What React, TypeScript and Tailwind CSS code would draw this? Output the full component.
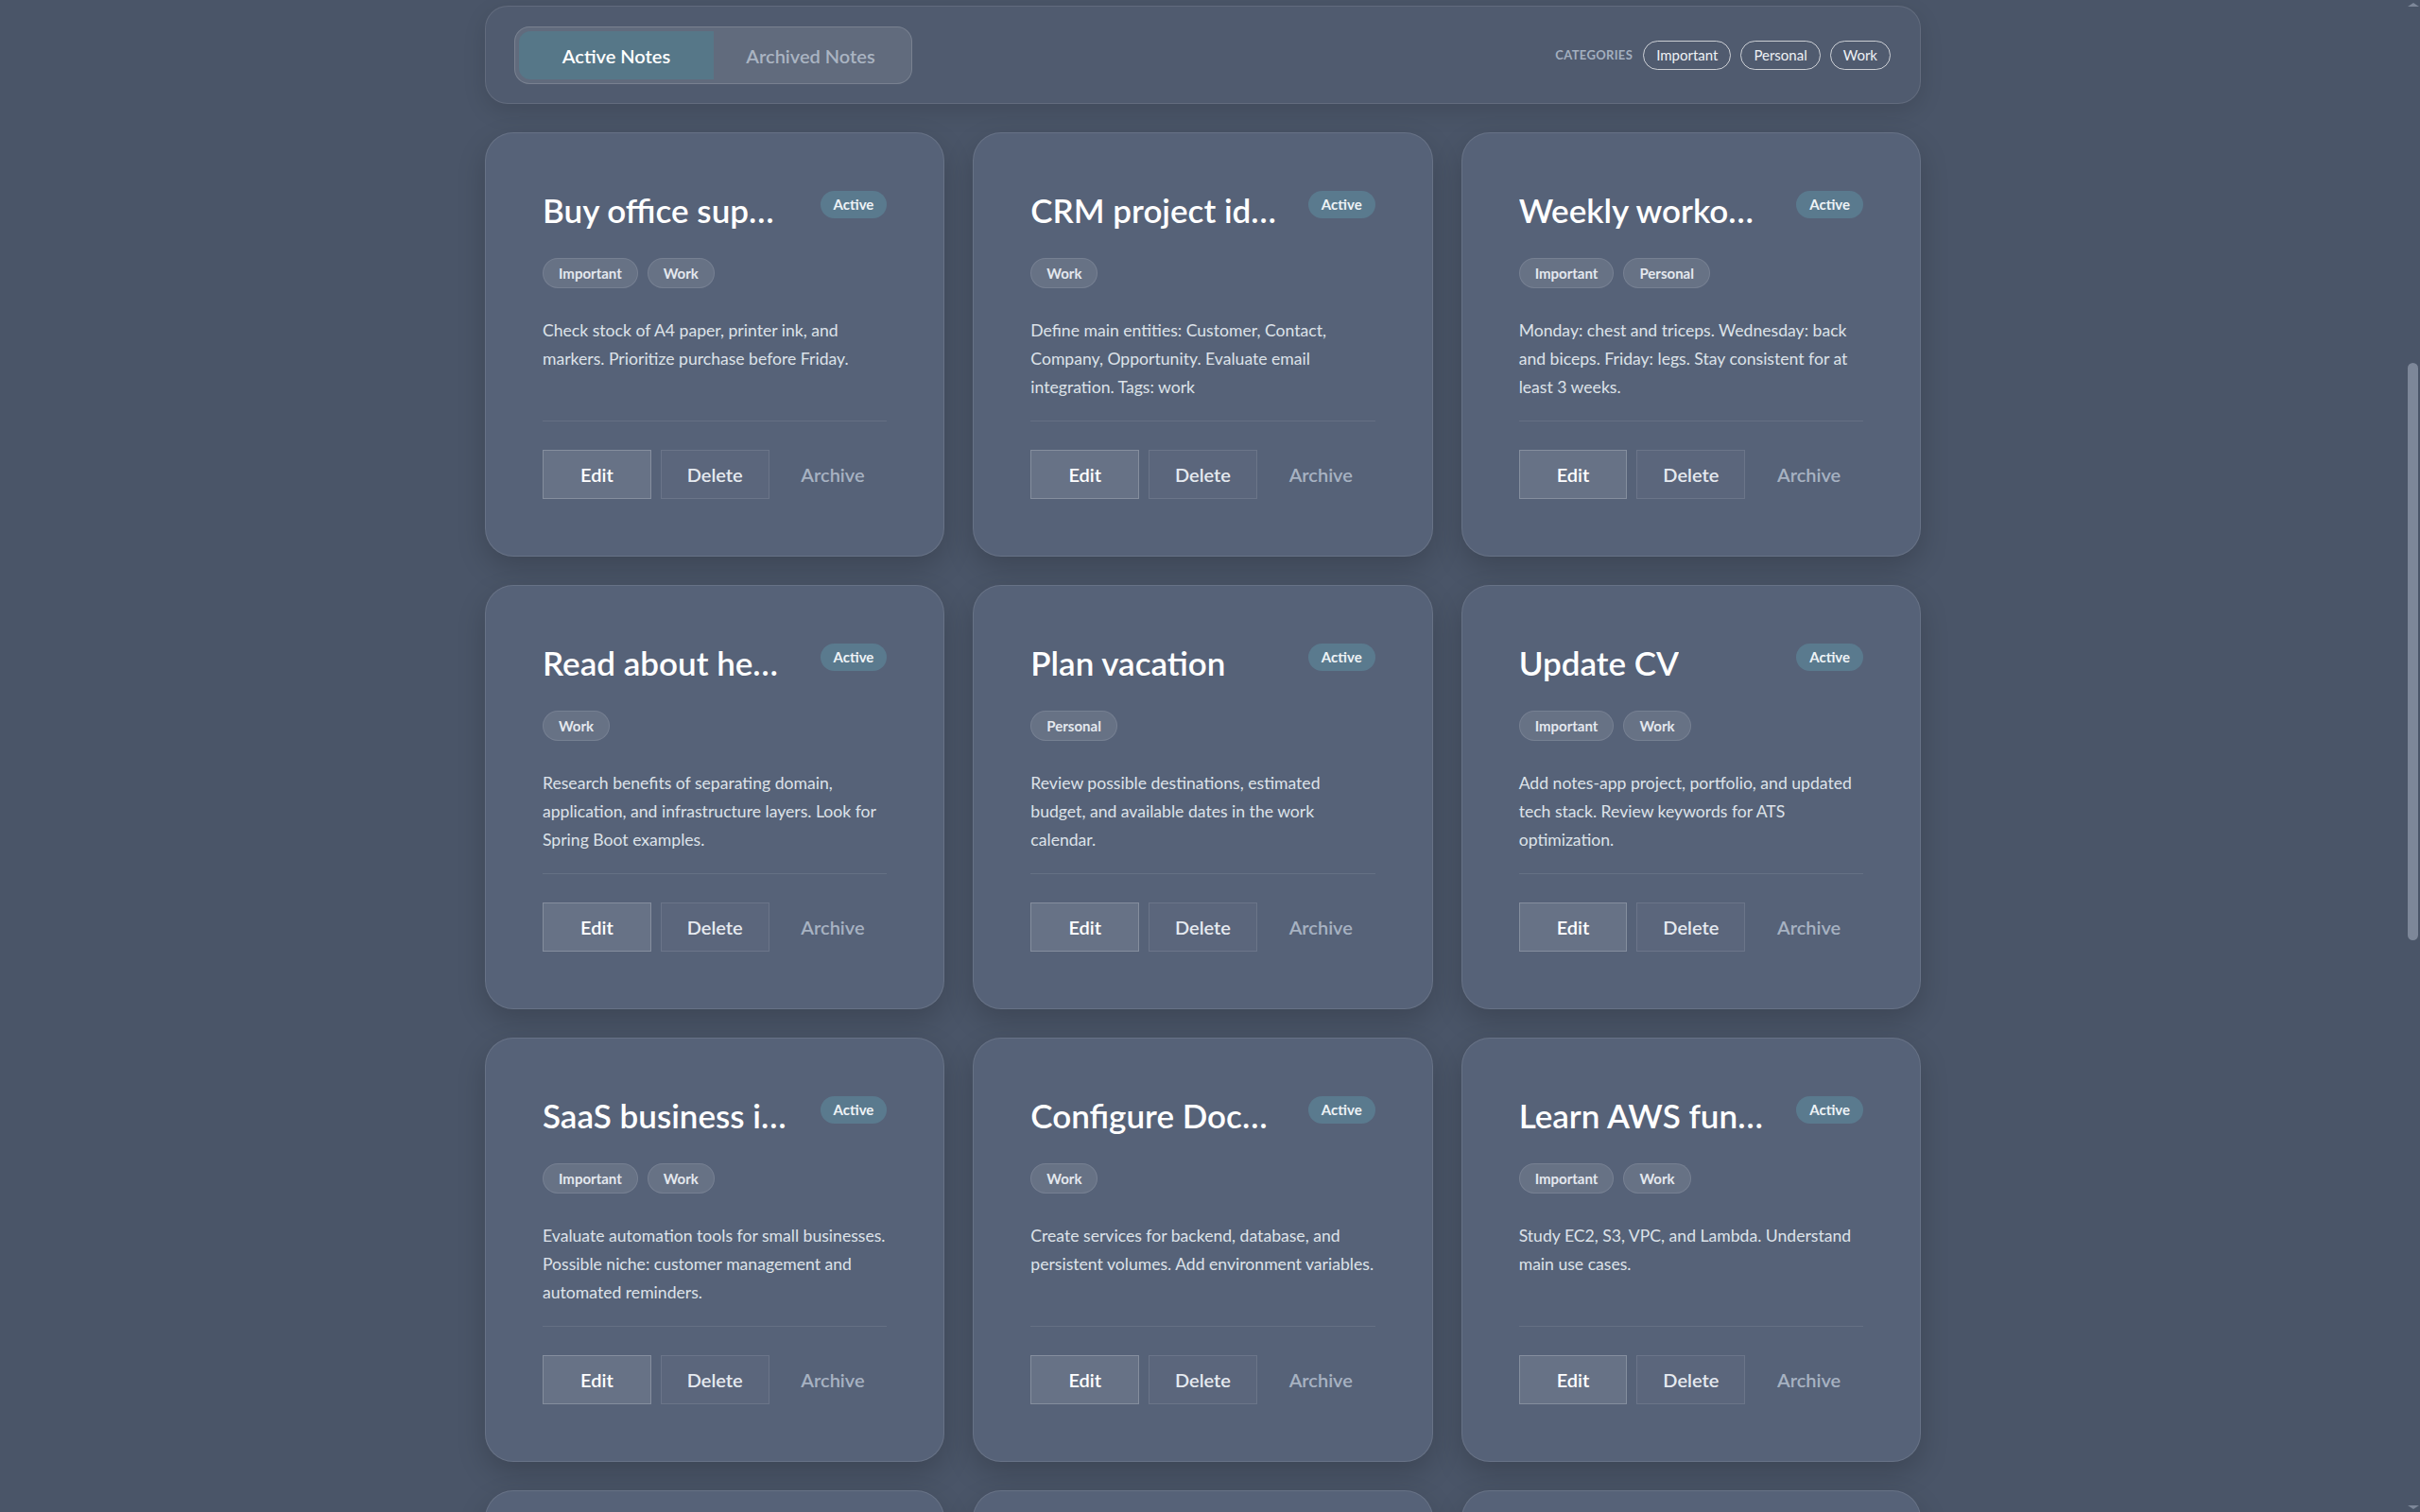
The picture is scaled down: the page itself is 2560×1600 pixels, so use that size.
import { useState } from 'react'

interface Note {
  id: number
  title: string
  tags: string[]
  content: string
}

const notes: Note[] = [
  { id: 1, title: 'Buy office supplies', tags: ['Important', 'Work'], content: 'Check stock of A4 paper, printer ink, and markers. Prioritize purchase before Friday.' },
  { id: 2, title: 'CRM project idea', tags: ['Work'], content: 'Define main entities: Customer, Contact, Company, Opportunity. Evaluate email integration. Tags: work' },
  { id: 3, title: 'Weekly workout routine', tags: ['Important', 'Personal'], content: 'Monday: chest and triceps. Wednesday: back and biceps. Friday: legs. Stay consistent for at least 3 weeks.' },
  { id: 4, title: 'Read about hexagonal architecture', tags: ['Work'], content: 'Research benefits of separating domain, application, and infrastructure layers. Look for Spring Boot examples.' },
  { id: 5, title: 'Plan vacation', tags: ['Personal'], content: 'Review possible destinations, estimated budget, and available dates in the work calendar.' },
  { id: 6, title: 'Update CV', tags: ['Important', 'Work'], content: 'Add notes-app project, portfolio, and updated tech stack. Review keywords for ATS optimization.' },
  { id: 7, title: 'SaaS business idea', tags: ['Important', 'Work'], content: 'Evaluate automation tools for small businesses. Possible niche: customer management and automated reminders.' },
  { id: 8, title: 'Configure Docker Compose', tags: ['Work'], content: 'Create services for backend, database, and persistent volumes. Add environment variables.' },
  { id: 9, title: 'Learn AWS fundamentals', tags: ['Important', 'Work'], content: 'Study EC2, S3, VPC, and Lambda. Understand main use cases.' },
  { id: 10, title: 'Grocery list', tags: ['Personal'], content: 'Milk, eggs, bread, coffee and fruit for the week.' },
  { id: 11, title: 'Team meeting notes', tags: ['Work'], content: 'Summarize sprint goals and blockers discussed on Monday.' },
  { id: 12, title: 'Book recommendations', tags: ['Personal'], content: 'Clean Code, Domain-Driven Design, The Pragmatic Programmer.' },
]

function NoteCard({ note }: { note: Note }) {
  return (
    <div className="rounded-[30px] border border-white/10 bg-[#566278] p-[60px] shadow-[0_12px_30px_rgba(0,0,0,0.18)]">
      {/* Header */}
      <div className="flex items-start justify-between gap-4">
        <h2 className="max-w-[262px] min-w-0 truncate text-[35px] leading-[1.2] font-semibold text-white">{note.title}</h2>
        <span className="mt-px shrink-0 rounded-full bg-[#5a7a8e] px-[14px] py-[5px] text-[15px] leading-[19px] font-bold text-[#eef3f6]">
          Active
        </span>
      </div>

      {/* Tags */}
      <div className="mt-[30px] flex gap-[10px]">
        {note.tags.map((tag) => (
          <span
            key={tag}
            className="rounded-full border border-white/10 bg-white/10 px-4 py-[6px] text-[15px] leading-[18px] font-bold text-[#e4e8ee]"
          >
            {tag}
          </span>
        ))}
      </div>

      {/* Content */}
      <p className="mt-[30px] min-h-[90px] text-[17.6px] leading-[30px] text-[#dde2e9]">{note.content}</p>

      <div className="mt-5 h-px bg-white/[0.09]" />

      {/* Actions */}
      <div className="mt-[30px] flex gap-[10px]">
        <button className="h-[52px] w-[115px] border border-white/20 bg-white/10 text-[20px] font-semibold text-white">
          Edit
        </button>
        <button className="h-[52px] w-[115px] border border-white/10 bg-white/[0.03] text-[20px] font-semibold text-[#e6eaf0]">
          Delete
        </button>
        <button className="h-[52px] w-[115px] text-[20px] font-semibold text-[#a7b2c2]">Archive</button>
      </div>
    </div>
  )
}

export default function App() {
  const [tab, setTab] = useState<'active' | 'archived'>('active')

  return (
    <div className="flex h-screen overflow-hidden bg-[#4a5568] font-[Lato,sans-serif]">
      <main className="flex-1 overflow-hidden pt-[6px]">
        <div className="mx-auto w-[1519px]">
          {/* Toolbar */}
          <div className="flex items-center justify-between rounded-[24px] border border-white/10 bg-[#505b6f] pt-[21px] pr-[31px] pb-[20px] pl-[30px] shadow-[0_8px_24px_rgba(0,0,0,0.12)]">
            <div className="flex rounded-2xl border border-white/15 bg-white/10 p-[4px]">
              <button
                onClick={() => setTab('active')}
                className={
                  tab === 'active'
                    ? 'h-[51px] w-[206px] rounded-l-xl bg-[#567788] text-[20px] font-semibold text-white'
                    : 'h-[51px] w-[206px] rounded-l-xl text-[20px] font-semibold text-[#aab4c2]'
                }
              >
                Active Notes
              </button>
              <button
                onClick={() => setTab('archived')}
                className={
                  tab === 'archived'
                    ? 'h-[51px] w-[205px] rounded-r-xl bg-[#567788] text-[20px] font-semibold text-white'
                    : 'h-[51px] w-[205px] rounded-r-xl text-[20px] font-semibold text-[#aab4c2]'
                }
              >
                Archived Notes
              </button>
            </div>

            <div className="flex items-center gap-[10px]">
              <span className="mr-px text-[13px] font-bold tracking-wide text-[#a3afbf] uppercase">Categories</span>
              {['Important', 'Personal', 'Work'].map((c) => (
                <span
                  key={c}
                  className="rounded-full border border-white/70 px-[13px] py-[5px] text-[15px] leading-[19px] text-[#eef1f5]"
                >
                  {c}
                </span>
              ))}
            </div>
          </div>

          {/* Notes grid */}
          <div className="mt-[30px] grid grid-cols-3 gap-[30px] pb-10">
            {notes.map((note) => (
              <NoteCard key={note.id} note={note} />
            ))}
          </div>
        </div>
      </main>

      {/* Scrollbar */}
      <div className="flex w-[15px] shrink-0 flex-col items-center">
        <div className="mt-[3px] h-0 w-0 border-x-[6px] border-b-[4px] border-x-transparent border-b-[#7d8799]" />
        <div className="mt-[377px] h-[611px] w-[11px] rounded-full bg-[#7d8799]" />
        <div className="mt-auto mb-[3px] h-0 w-0 border-x-[6px] border-t-[4px] border-x-transparent border-t-[#7d8799]" />
      </div>
    </div>
  )
}
